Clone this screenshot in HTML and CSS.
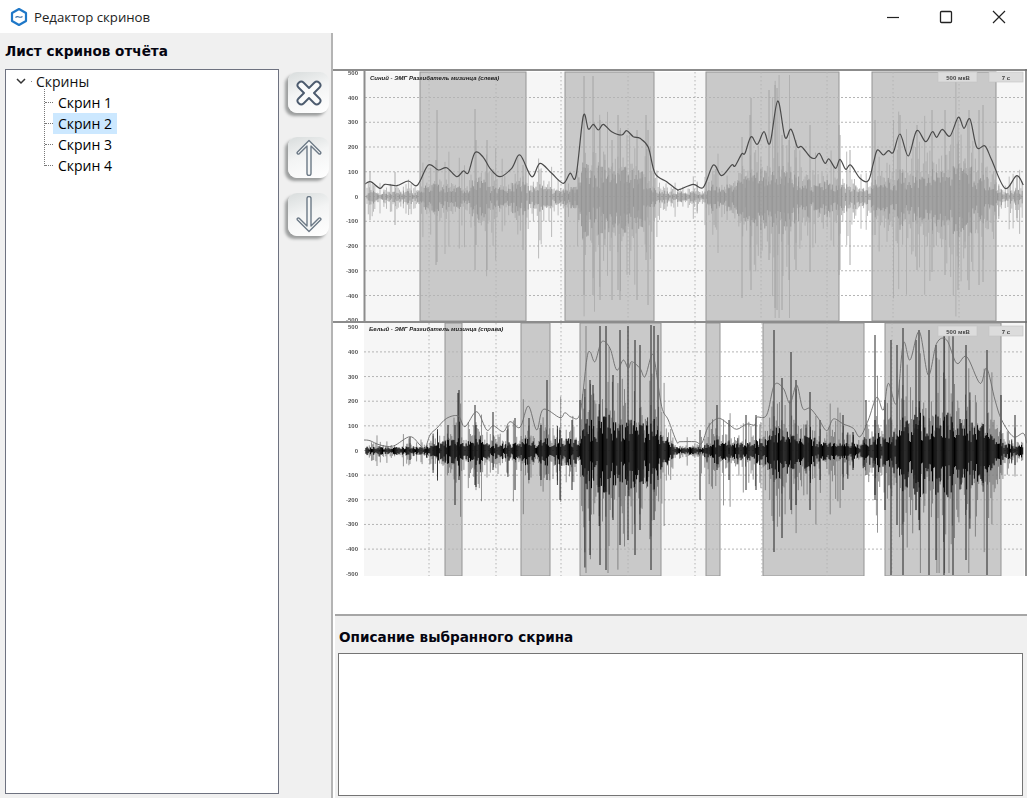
FILE: index.html
```html
<!DOCTYPE html>
<html lang="ru">
<head>
<meta charset="utf-8">
<title>Редактор скринов</title>
<link rel="stylesheet" href="styles.css">
</head>
<body>
<div class="window">
  <header class="titlebar">
    <svg class="app-icon" width="18" height="20" viewBox="0 0 18 20"><path d="M9 2 16 6v8l-7 4-7-4V6z" fill="#fff" stroke="#1f78c8" stroke-width="2.2" stroke-linejoin="round"/><path d="M5.5 10.5c1.5-1.5 2.5-1 3.500-.5s2 .5 3.500-.5" fill="none" stroke="#3a6ea5" stroke-width="1.100"/></svg>
    <span class="title">Редактор скринов</span>
    <div class="controls">
      <svg width="14" height="14" viewBox="0 0 14 14"><path d="M1 7.500h12" stroke="#222" stroke-width="1.200"/></svg>
      <svg width="14" height="14" viewBox="0 0 14 14"><rect x="1.500" y="1.500" width="11" height="11" rx="1" fill="none" stroke="#222" stroke-width="1.300"/></svg>
      <svg width="14" height="14" viewBox="0 0 14 14"><path d="M1 1l12 12M13 1 1 13" stroke="#222" stroke-width="1.200"/></svg>
    </div>
  </header>
  <main class="body">
    <section class="left">
      <h2 class="heading">Лист скринов отчёта</h2>
      <div class="left-row">
        <div class="tree">
          <div class="tree-root">
            <svg class="chev" width="10" height="7" viewBox="0 0 10 7"><path d="M1 1l4 4 4-4" fill="none" stroke="#333" stroke-width="1.500"/></svg>
            <span class="root-dot"></span>
            <span>Скрины</span>
          </div>
          <ul class="tree-list">
            <li class="tree-item"><span class="item-label">Скрин 1</span></li>
            <li class="tree-item selected"><span class="item-label">Скрин 2</span></li>
            <li class="tree-item"><span class="item-label">Скрин 3</span></li>
            <li class="tree-item"><span class="item-label">Скрин 4</span></li>
          </ul>
        </div>
        <div class="tools">
          <button class="tool tool-x" type="button" aria-label="Удалить">
            <svg width="26" height="26" viewBox="0 0 26 26"><path d="M7.500 2.500 13 8l5.500-5.500a3.200 3.200 0 0 1 4.500 0l.5.5a3.200 3.200 0 0 1 0 4.500L18 13l5.500 5.500a3.200 3.200 0 0 1 0 4.500l-.5.5a3.200 3.200 0 0 1-4.500 0L13 18l-5.500 5.500a3.200 3.200 0 0 1-4.500 0l-.5-.5a3.200 3.200 0 0 1 0-4.500L8 13 2.500 7.500a3.200 3.200 0 0 1 0-4.500l.5-.5a3.200 3.200 0 0 1 4.500 0z" fill="#fafbfb" stroke="#4c5b6e" stroke-width="1.900" stroke-linejoin="round"/></svg>
          </button>
          <button class="tool tool-up" type="button" aria-label="Вверх">
            <svg width="26" height="37" viewBox="0 0 26 37"><path d="M13 1.500 24.500 13a1.200 1.200 0 0 1-1.700 1.700L15 7v27.500a2 2 0 0 1-4 0V7L3.200 14.700A1.200 1.200 0 0 1 1.500 13z" fill="#f4f6f6" stroke="#6c7986" stroke-width="1.400" stroke-linejoin="round"/></svg>
          </button>
          <button class="tool tool-down" type="button" aria-label="Вниз">
            <svg width="26" height="37" viewBox="0 0 26 37"><path d="M13 35.500 24.500 24a1.200 1.200 0 0 0-1.700-1.700L15 30V2.500a2 2 0 0 0-4 0V30l-7.800-7.700A1.200 1.200 0 0 0 1.500 24z" fill="#f4f6f6" stroke="#6c7986" stroke-width="1.400" stroke-linejoin="round"/></svg>
          </button>
        </div>
      </div>
    </section>
    <section class="right">
      <div class="charts">
        <svg id="charts" class="charts-svg" width="694" height="507" viewBox="333 69 694 507"></svg>
      </div>
      <div class="desc">
        <h2 class="heading desc-heading">Описание выбранного скрина</h2>
        <div class="desc-box"></div>
      </div>
    </section>
  </main>
</div>
<script src="chart.js"></script>
</body>
</html>
```
FILE: styles.css
```css
* { box-sizing: border-box; }
html, body { margin: 0; padding: 0; background: #fff; }
body { font-family: "Open Sans", "Liberation Sans", sans-serif; color: #000; overflow: hidden; }
.window { width: 1027px; height: 798px; display: flex; flex-direction: column; }
.titlebar { height: 33px; flex: none; display: flex; align-items: center; padding-left: 10px; background: #fff; }
.app-icon { flex: none; margin-right: 6px; }
.title { font-size: 13.200px; color: #222; }
.controls { margin-left: auto; display: flex; align-items: center; gap: 39px; padding-right: 21px; }
.controls svg { display: block; }
.body { flex: 1; display: flex; min-height: 0; }
.left { width: 333px; flex: none; background: #f0f0f0; border-right: 2px solid #b4b4b4; padding: 0 0 4px 5px; display: flex; flex-direction: column; }
.heading { margin: 0; font-family: "DejaVu Sans", sans-serif; font-weight: 700; font-size: 13.600px; line-height: 18px; color: #050510; }
.left .heading { padding-top: 9px; height: 36px; }
.left-row { flex: 1; display: flex; min-height: 0; }
.tree { width: 274px; background: #fff; border: 1px solid #6e7280; padding-top: 1px; font-size: 14px; line-height: 21px; }
.tree-root { display: flex; align-items: center; height: 21px; padding-left: 10px; color: #111; }
.chev { flex: none; }
.root-dot { width: 1px; height: 1px; background: #888; margin: 0 4px 0 5px; }
.tree-list { list-style: none; margin: 0; padding: 0 0 0 39px; position: relative; }
.tree-list::before { content: ""; position: absolute; left: 38px; top: -3px; bottom: 10px; border-left: 1px dotted #777; }
.tree-item { height: 21px; display: flex; align-items: center; position: relative; }
.tree-item::before { content: ""; width: 8px; border-top: 1px dotted #777; flex: none; margin-right: 0; }
.item-label { padding: 0 5px; height: 21px; }
.selected .item-label { background: #cce8ff; }
.tools { flex: 1; display: flex; flex-direction: column; padding: 3px 0 0 9px; }
.tool { width: 41px; padding: 0; border: 0; border-radius: 9px; background: linear-gradient(160deg, #d8dcdc 0%, #f3f4f4 45%, #fff 100%); box-shadow: -3px 3px 3px #9c9e9e; display: flex; align-items: center; justify-content: center; }
.tool svg { display: block; }
.tool-x { height: 41px; }
.tool-up { height: 41px; margin-top: 24px; }
.tool-down { height: 43px; margin-top: 15px; }
.right { flex: 1; min-width: 0; display: flex; flex-direction: column; background: #fff; }
.charts { padding-top: 36px; height: 581px; flex: none; }
.charts-svg { display: block; filter: blur(0.5px); font-family: "Liberation Sans", sans-serif; }
.desc { flex: 1; margin-left: 2px; background: #f0f0f0; border-top: 2px solid #a6a6a6; padding: 12px 4px 2px 3px; display: flex; flex-direction: column; min-height: 0; }
.desc-heading { margin-bottom: 7px; height: 18px; padding-left: 1px; }
.desc-box { flex: 1; background: #fff; border: 1px solid #747474; }
```
FILE: chart.js
```js
// Draws the two EMG traces: envelope points are read off the recording, the raw signal is seeded noise inside it.
(function () {
  var NS = 'http://www.w3.org/2000/svg';
  var svg = document.getElementById('charts');
  var seed = 12345;
  function rnd() { seed = (seed * 16807) % 2147483647; return seed / 2147483647; }
  function el(name, attrs, text) {
    var n = document.createElementNS(NS, name);
    for (var k in attrs) n.setAttribute(k, attrs[k]);
    if (text) n.textContent = text;
    svg.appendChild(n);
    return n;
  }
  function z(list, ox, oy) { return list.map(function (p) { return [ox + p[0] / 3, oy + p[1] / 3]; }); }
  function smooth(pts) {
    var d = 'M' + pts[0][0].toFixed(1) + ' ' + pts[0][1].toFixed(1);
    for (var i = 0; i < pts.length - 1; i++) {
      var p0 = pts[i - 1] || pts[i], p1 = pts[i], p2 = pts[i + 1], p3 = pts[i + 2] || p2;
      d += 'C' + (p1[0] + (p2[0] - p0[0]) / 6).toFixed(1) + ' ' + (p1[1] + (p2[1] - p0[1]) / 6).toFixed(1) + ' ' +
        (p2[0] - (p3[0] - p1[0]) / 6).toFixed(1) + ' ' + (p2[1] - (p3[1] - p1[1]) / 6).toFixed(1) + ' ' +
        p2[0].toFixed(1) + ' ' + p2[1].toFixed(1);
    }
    return d;
  }
  function interp(pts, x) {
    for (var i = 0; i < pts.length - 1; i++) {
      if (x >= pts[i][0] && x <= pts[i + 1][0]) {
        var t = (x - pts[i][0]) / (pts[i + 1][0] - pts[i][0] || 1);
        return pts[i][1] + t * (pts[i + 1][1] - pts[i][1]);
      }
    }
    return pts[pts.length - 1][1];
  }

  function drawChart(c) {
    el('rect', { x: c.left, y: c.top, width: c.right - c.left, height: c.bottom - c.top, fill: '#f6f6f6' });
    c.white.forEach(function (b) {
      el('rect', { x: b[0], y: c.top, width: b[1] - b[0], height: c.bottom - c.top, fill: '#fff' });
    });
    c.bands.forEach(function (b) {
      el('rect', { x: b[0], y: c.top, width: b[1] - b[0], height: c.bottom - c.top, fill: '#c9c9c9', stroke: '#949494', 'stroke-width': 1 });
    });
    c.vgrid.forEach(function (x) {
      el('line', { x1: x, x2: x, y1: c.top, y2: c.bottom, stroke: '#b4b4b4', 'stroke-dasharray': '1.500 2.500' });
    });
    for (var v = 500; v >= -500; v -= 100) {
      var y = c.zero - v * c.scale;
      if (v !== 500 && v !== -500) el('line', { x1: c.left, x2: c.right, y1: y, y2: y, stroke: '#b4b4b4', 'stroke-dasharray': '2 2' });
      el('text', { x: 358, y: y + 2, 'font-size': 6, 'font-weight': 700, 'text-anchor': 'end', fill: '#555' }, String(v));
    }

    // raw signal: spiky strokes whose height follows the envelope, kept inside the plot
    var soft = '', core = '', thin = '', x;
    var maxUp = c.zero - c.top - 3, maxDn = c.bottom - c.zero - 3;
    for (x = c.left + 2; x < c.right - 1; x += c.step) {
      var env = Math.max(10, c.zero - interp(c.env, x));
      var r = rnd();
      var mod = r < 0.7 ? 0.2 + rnd() * 0.45 : r < 0.94 ? 0.6 + rnd() * 0.5 : 1.1 + rnd() * 0.8;
      var up = Math.min(maxUp, env * c.amp * mod * (0.7 + rnd() * 0.4));
      var dn = Math.min(maxDn, env * c.amp * mod * (0.9 + rnd() * 0.6));
      soft += 'M' + x.toFixed(2) + ' ' + (c.zero - up).toFixed(1) + 'V' + (c.zero + dn).toFixed(1);
      var k = env * c.core * (0.25 + rnd() * 0.75);
      core += 'M' + x.toFixed(2) + ' ' + (c.zero - k * 0.85).toFixed(1) + 'V' + (c.zero + k * 1.05).toFixed(1);
      if (rnd() < c.thinRate) thin += 'M' + x.toFixed(2) + ' ' + (c.zero - Math.min(maxUp, up * 1.15)).toFixed(1) + 'V' + (c.zero + Math.min(maxDn, dn * 1.15)).toFixed(1);
    }
    el('path', { d: soft, stroke: c.softColor, 'stroke-width': 0.8, fill: 'none', opacity: c.softOpacity });
    el('path', { d: core, stroke: c.coreColor, 'stroke-width': c.coreWidth, fill: 'none' });
    el('path', { d: thin, stroke: c.spikeColor, 'stroke-width': 0.8, fill: 'none' });
    var sp = '';
    c.spikes.forEach(function (s) { sp += 'M' + s[0] + ' ' + s[1] + 'V' + s[2]; });
    el('path', { d: sp, stroke: c.spikeColor, 'stroke-width': c.spikeWidth, fill: 'none' });

    // envelope
    el('path', { d: smooth(c.env), stroke: c.envColor, 'stroke-width': c.envWidth, fill: 'none' });

    el('text', { x: c.titleX, y: c.top + 8, 'font-size': 6, 'font-weight': 700, 'font-style': 'italic', fill: '#222' }, c.title);
    [[938, 39, '500 мкВ', 958], [989, 34, '7 с', 1006]].forEach(function (b) {
      el('rect', { x: b[0], y: c.badgeY, width: b[1], height: 10, fill: '#dcdcdc', stroke: '#c4c4c4', 'stroke-width': 0.6 });
      el('text', { x: b[3], y: c.badgeY + 7.5, 'font-size': 6, 'font-weight': 700, 'text-anchor': 'middle', fill: '#444' }, b[2]);
    });
  }

  var env1 = z([[105,372],[122,365],[150,385],[165,373],[200,377],[235,363],[262,376],[295,315],[325,330],[350,323],[380,350],[400,333],[415,338],[435,278],[460,292],[480,325],[510,350],[545,325],[570,285],[605,350],[630,310],[665,340],[700,370],[720,340],[738,348],[760,168],[775,207],[790,193],[805,210],[820,193],[845,215],[875,225],[890,212],[910,230],[930,235],[955,262],[975,340],[1010,365],[1040,388]], 330, 60)
    .concat(z([[0,388],[40,373],[70,382],[100,315],[125,347],[155,315],[165,318],[185,282],[195,280],[213,230],[232,253],[252,215],[270,250],[293,123],[315,232],[333,208],[352,260],[365,260],[390,290],[405,295],[418,280],[435,310],[447,297],[467,325],[480,298],[497,328],[512,315],[540,355],[565,362],[580,310],[592,270],[610,285],[625,272],[640,277],[660,222],[685,288],[710,212],[737,245],[757,215],[770,232],[787,208],[810,228],[835,172],[852,205],[870,177],[890,262],[915,258],[935,300],[975,385],[1010,347],[1030,375]], 680, 60));

  var spikes1 = [[370,171,220],[395,172,225],[437,110,262],[436,160,265],[475,109,270],[476,140,245],[487,140,270],[523,165,250],[584,76,295],[593,76,295],[600,120,300],[612,140,300],[618,115,290],[620,130,300],[637,130,300],[648,130,305],[646,115,260],[751,98,290],[750,115,270],[742,137,298],[769,90,260],[777,88,310],[775,85,308],[782,135,310],[789,140,280],[796,140,270],[810,125,272],[839,125,275],[840,135,270],[850,150,265],[875,120,235],[900,115,225],[932,110,272],[917,125,270],[945,110,275],[958,120,290],[969,110,290],[979,110,285],[983,105,282],[1017,175,218]];
  drawChart({
    left: 365, right: 1024, top: 72, bottom: 321, zero: 196.5, scale: 0.2475, step: 1.3,
    bands: [[420,526],[565,654],[706,839],[872,996]],
    white: [[839,872]],
    vgrid: [429,496,561,628,695,761,827,893,959],
    env: env1,
    amp: 1.05, core: 0.55, coreWidth: 0.8, thinRate: 0.01,
    softColor: '#a8a8a8', softOpacity: 0.95, coreColor: '#8e8e8e',
    spikes: spikes1, spikeColor: '#a0a0a0', spikeWidth: 0.9,
    envColor: '#4a4a4a', envWidth: 1.2,
    title: 'Синий - ЭМГ Разгибатель мизинца (слева)', titleX: 370, badgeY: 72
  });

  var env2 = z([[102,360],[120,362],[150,375],[190,378],[240,350],[270,375],[285,385],[300,345],[320,325],[350,295],[385,288],[405,320],[440,275],[470,330],[490,317],[520,335],[540,305],[570,322],[595,258],[620,330],[640,268],[690,293],[705,278],[725,292],[750,280],[770,120],[780,95],[795,125],[815,65],[840,85],[860,150],[880,120],[895,145],[905,125],[930,145],[945,170],[965,105],[975,130],[995,260],[1015,300],[1040,365]], 330, 320)
    .concat(z([[0,365],[45,365],[65,370],[85,320],[115,295],[145,312],[170,328],[200,312],[225,315],[230,292],[260,285],[283,195],[310,205],[330,250],[350,195],[368,265],[390,265],[415,295],[440,332],[460,297],[490,312],[520,325],[540,350],[565,300],[590,232],[610,270],[625,190],[650,250],[670,70],[690,120],[718,35],[745,165],[770,70],[800,60],[830,130],[860,110],[900,190],[920,145],[945,240],[965,300],[1000,350],[1030,340],[1040,370]], 680, 320));

  var spikes2 = [[410,437,460],[448,425,460],[455,425,505],[458,393,450],[459,390,480],[475,405,485],[476,425,487],[493,412,470],[515,418,490],[529,418,480],[547,380,480],[541,425,480],[560,430,500],[572,420,490],[580,400,460],[590,380,555],[593,385,470],[600,326,565],[606,326,570],[613,375,520],[620,330,545],[628,326,540],[635,340,555],[640,345,530],[651,325,570],[654,326,520],[658,335,480],[700,430,500],[717,405,470],[729,420,480],[746,415,490],[756,415,490],[774,330,552],[782,378,538],[791,352,510],[796,380,505],[810,392,510],[820,420,480],[843,415,490],[853,432,470],[875,420,495],[866,400,475],[875,335,500],[885,400,510],[891,340,575],[897,345,525],[903,328,575],[919,330,520],[916,340,510],[929,330,575],[944,335,575],[936,345,560],[953,335,575],[966,345,560],[987,350,575],[1001,395,465],[1015,415,465]];
  drawChart({
    left: 364, right: 1024, top: 323, bottom: 576, zero: 450.5, scale: 0.2465, step: 1.1,
    bands: [[445,462],[521,550],[580,661],[706,720],[763,864],[885,1001]],
    white: [[720,763],[864,885]],
    vgrid: [429,496,561,628,695,762,827,892],
    env: env2,
    amp: 0.9, core: 0.42, coreWidth: 1, thinRate: 0.05,
    softColor: '#5c5c5c', softOpacity: 0.8, coreColor: '#000',
    spikes: spikes2, spikeColor: '#101010', spikeWidth: 0.9,
    envColor: '#6b6b6b', envWidth: 0.9,
    title: 'Белый - ЭМГ Разгибатель мизинца (справа)', titleX: 369, badgeY: 326
  });

  // frame lines around the first trace
  el('path', { d: 'M333 70H1027M333 322H1027', stroke: '#8c8c8c', 'stroke-width': 2, fill: 'none' });
  el('path', { d: 'M364.500 70V322', stroke: '#8c8c8c', 'stroke-width': 2, fill: 'none' });
  el('path', { d: 'M1026 69V576', stroke: '#6f6f6f', 'stroke-width': 1.500, fill: 'none' });
})();
```
